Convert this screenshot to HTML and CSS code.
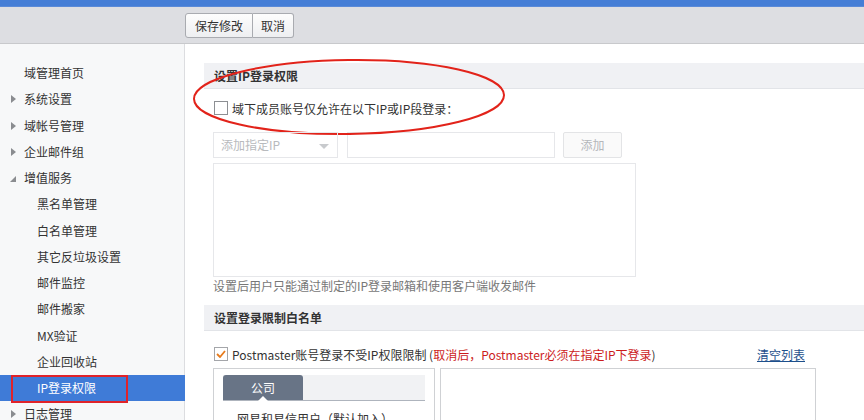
FILE: index.html
```html
<!DOCTYPE html>
<html>
<head>
<meta charset="utf-8">
<link rel="stylesheet" href="styles.css">
</head>
<body>
<div class="topbar"></div>
<div class="toolbar">
  <div class="tb-spacer"></div>
  <div class="btn-group">
    <button class="tbtn">保存修改</button>
    <button class="tbtn">取消</button>
  </div>
</div>
<div class="main">
  <aside class="sidebar">
    <ul class="nav">
      <li class="nav-item">域管理首页</li>
      <li class="nav-item has-arrow"><span class="arrow"></span>系统设置</li>
      <li class="nav-item has-arrow"><span class="arrow"></span>域帐号管理</li>
      <li class="nav-item has-arrow"><span class="arrow"></span>企业邮件组</li>
      <li class="nav-item has-arrow"><span class="arrow open"></span>增值服务</li>
      <li class="nav-sub">黑名单管理</li>
      <li class="nav-sub">白名单管理</li>
      <li class="nav-sub">其它反垃圾设置</li>
      <li class="nav-sub">邮件监控</li>
      <li class="nav-sub">邮件搬家</li>
      <li class="nav-sub">MX验证</li>
      <li class="nav-sub">企业回收站</li>
      <li class="nav-sub active">IP登录权限<span class="mark-box"></span></li>
      <li class="nav-item has-arrow"><span class="arrow"></span>日志管理</li>
    </ul>
  </aside>
  <section class="content">
    <svg class="mark-ellipse" width="330" height="84" viewBox="0 0 330 84">
      <ellipse cx="156" cy="39" rx="155" ry="37" transform="rotate(-0.7 156 39)" fill="none" stroke="#e2231a" stroke-width="2"/>
    </svg>
    <div class="sec-head">设置IP登录权限</div>
    <div class="sec-body">
      <label class="check-row"><span class="cb"></span>域下成员账号仅允许在以下IP或IP段登录：</label>
      <div class="ip-row">
        <div class="select">添加指定IP<span class="caret"></span></div>
        <div class="input"></div>
        <div class="add-btn">添加</div>
      </div>
      <div class="textarea"></div>
      <div class="hint">设置后用户只能通过制定的IP登录邮箱和使用客户端收发邮件</div>
    </div>
    <div class="sec-head">设置登录限制白名单</div>
    <div class="sec-body2">
      <div class="check-row2">
        <label class="check-row"><span class="cb checked"><svg width="10" height="8" viewBox="0 0 10 8"><path d="M1 4 L4 7 L9 1" fill="none" stroke="#e77b1c" stroke-width="1.8"/></svg></span>Postmaster账号登录不受IP权限限制 (<span class="red">取消后，Postmaster必须在指定IP下登录</span>)</label>
        <a class="clear-link">清空列表</a>
      </div>
      <div class="boxes">
        <div class="box-left">
          <div class="tabs"><div class="tab">公司</div></div>
          <div class="tree-line">网易和易信用户（默认加入）</div>
        </div>
        <div class="box-right"></div>
      </div>
    </div>
  </section>
</div>
</body>
</html>
```
FILE: styles.css
```css
* { box-sizing: border-box; }
html, body { margin: 0; padding: 0; }
body {
  width: 864px;
  height: 420px;
  overflow: hidden;
  font-family: "Noto Sans CJK SC", "Liberation Sans", sans-serif;
  font-size: 12px;
  color: #333;
  background: #fff;
}
.topbar {
  height: 7px;
  background: #457ed6;
  border-bottom: 1px solid #5a8ad8;
}
.toolbar {
  height: 37px;
  background: #dddee2;
  border-bottom: 1px solid #c8c9cc;
  display: flex;
  align-items: flex-start;
  padding-top: 6px;
}
.tb-spacer { width: 185px; }
.btn-group { display: flex; }
.tbtn {
  height: 25px;
  padding: 0 9px;
  font-family: inherit;
  font-size: 12px;
  color: #333;
  background: linear-gradient(#fdfdfd, #eeeff1);
  border: 1px solid #a9abb0;
  border-radius: 3px 0 0 3px;
  line-height: 23px;
}
.tbtn + .tbtn {
  border-left: none;
  border-radius: 0 3px 3px 0;
  padding: 0 8px;
}
.main { display: flex; height: 376px; }
.sidebar {
  width: 185px;
  flex: none;
  background: #f7f8f9;
  border-right: 1px solid #dcdde0;
  padding-top: 16px;
}
.nav { list-style: none; margin: 0; padding: 0; }
.nav-item, .nav-sub {
  position: relative;
  height: 26.25px;
  line-height: 26px;
  padding-left: 24px;
  color: #333;
  font-size: 12px;
}
.nav-sub { padding-left: 37px; }
.nav-sub.active { background: #3f7bd7; color: #fff; margin-right: -1px; }
.arrow {
  position: absolute;
  left: 11px;
  top: 9px;
  width: 0; height: 0;
  border-top: 4px solid transparent;
  border-bottom: 4px solid transparent;
  border-left: 5px solid #8a8c90;
}
.arrow.open {
  left: 10px;
  top: 11px;
  border-top: 6px solid transparent;
  border-bottom: 0;
  border-left: 0;
  border-right: 6px solid #8a8c90;
}
.mark-box {
  position: absolute;
  left: 11px;
  top: 0;
  width: 117px;
  height: 28px;
  border: 2px solid #e0232a;
}
.content {
  position: relative;
  flex: 1;
  padding: 19px 0 0 19px;
}
.mark-ellipse {
  position: absolute;
  left: 8px;
  top: 14px;
}
.sec-head {
  height: 26px;
  line-height: 25px;
  background: #f0f1f4;
  border-bottom: 1px solid #e2e4e8;
  padding-left: 10px;
  font-weight: bold;
  color: #333;
}
.sec-body { padding: 10px 0 0 9px; height: 216px; }
.check-row {
  display: flex;
  align-items: center;
  height: 18px;
  color: #333;
}
.cb {
  width: 14px;
  height: 14px;
  border: 1px solid #8d8f93;
  background: #fff;
  margin: 0 4px 0 1px;
  display: flex;
  align-items: center;
  justify-content: center;
}
.cb.checked { border-color: #a4a6aa; }
.ip-row {
  display: flex;
  gap: 9px;
  margin-top: 15px;
  height: 26px;
}
.select {
  position: relative;
  width: 125px;
  border: 1px solid #e6e7ea;
  color: #b8babd;
  padding-left: 7px;
  line-height: 24px;
}
.caret {
  position: absolute;
  right: 8px;
  top: 11px;
  border-left: 5px solid transparent;
  border-right: 5px solid transparent;
  border-top: 5px solid #c8cacd;
}
.input { width: 208px; border: 1px solid #e6e7ea; }
.add-btn {
  width: 59px;
  border: 1px solid #e3e4e6;
  border-radius: 2px;
  background: #fafafa;
  color: #b5b7ba;
  text-align: center;
  line-height: 24px;
  margin-left: -1px;
}
.textarea {
  margin-top: 5px;
  width: 423px;
  height: 114px;
  border: 1px solid #e6e7ea;
}
.hint { margin-top: -1px; color: #777; line-height: 20px; }
.sec-body2 { padding: 14px 0 0 9px; }
.check-row2 {
  display: flex;
  align-items: center;
  width: 593px;
  justify-content: space-between;
}
.red { color: #cc1c1c; }
.clear-link {
  color: #1d4f8c;
  text-decoration: underline;
  margin-right: 1px;
}
.boxes { display: flex; gap: 5px; margin-top: 5px; }
.box-left {
  width: 222px;
  height: 80px;
  border: 1px solid #cfd1d4;
  padding: 6px 9px 0 9px;
}
.tabs {
  height: 26px;
  background: #f1f2f4;
  border-bottom: 1px solid #aeb4bd;
}
.tab {
  position: relative;
  width: 80px;
  height: 25px;
  background: #687486;
  color: #fff;
  text-align: center;
  line-height: 25px;
  border-radius: 3px 3px 0 0;
}
.tab::after {
  content: "";
  position: absolute;
  left: 35px;
  bottom: -1px;
  border-left: 5px solid transparent;
  border-right: 5px solid transparent;
  border-bottom: 5px solid #fff;
}
.tree-line { padding: 9px 0 0 14px; color: #333; }
.box-right {
  width: 376px;
  height: 80px;
  border: 1px solid #cfd1d4;
}
```
